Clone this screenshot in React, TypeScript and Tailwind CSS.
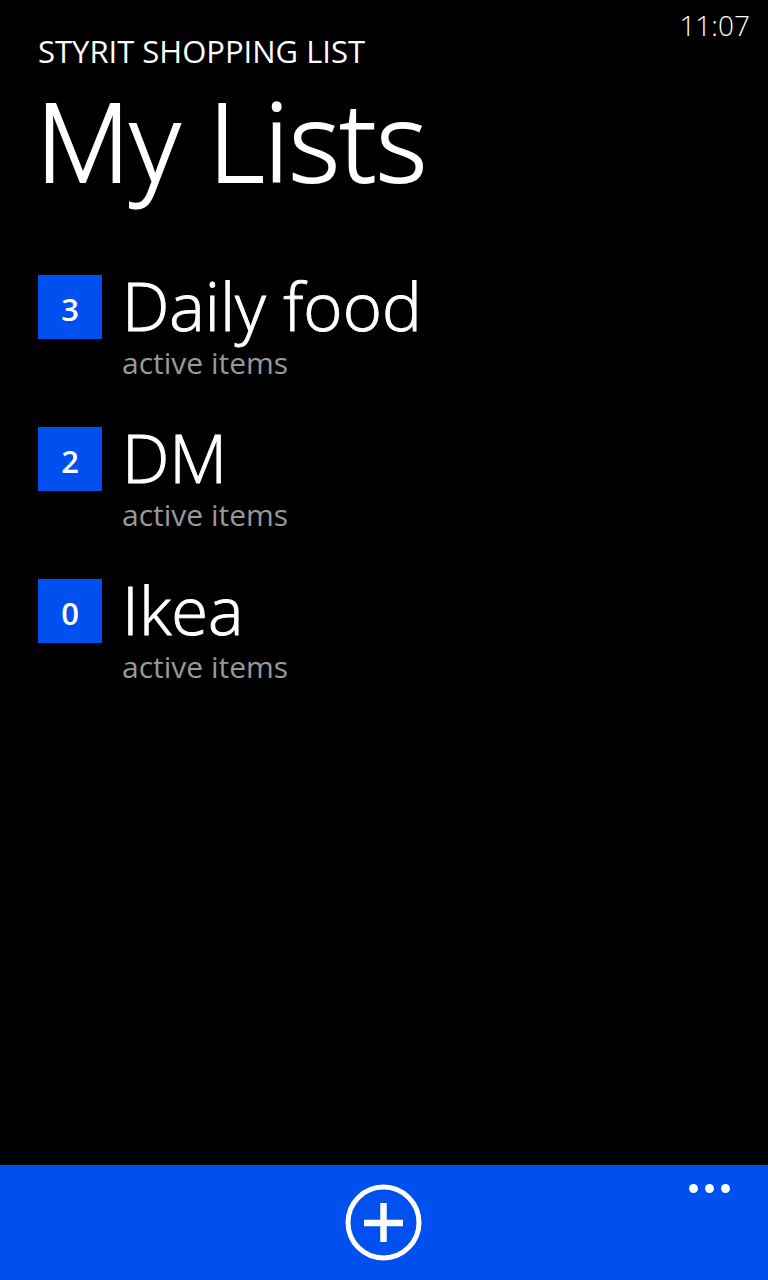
const lists = [
  { name: 'Daily food', count: 3 },
  { name: 'DM', count: 2 },
  { name: 'Ikea', count: 0 },
];

export default function App() {
  return (
    <div className="flex min-h-screen flex-col bg-black font-['Open_Sans','Noto_Sans',sans-serif] text-white">
      <header className="flex items-start justify-between pl-[38px] pr-[18px]">
        <div className="pt-8">
          <p className="text-[31px] leading-[38px]">STYRIT SHOPPING LIST</p>
          <h1 className="-ml-0.5 mt-2 text-[109px] font-light leading-[124px] [-webkit-text-stroke:2px_white]">
            My Lists
          </h1>
        </div>
        <time className="pt-2 text-[28px] font-light leading-[34px]">11:07</time>
      </header>
      <main className="grow px-[38px] pt-[73px]">
        <ul className="flex flex-col gap-12">
          {lists.map((list) => (
            <li key={list.name}>
              <a href="#" className="flex h-[104px] items-start gap-5">
                <span className="flex size-16 shrink-0 items-center justify-center bg-[#0050ef] pt-1 text-[31px] font-semibold">
                  {list.count}
                </span>
                <span className="flex flex-col gap-2">
                  <span className="text-[67px] font-light leading-[60px] [-webkit-text-stroke:1px_white]">
                    {list.name}
                  </span>
                  <span className="text-[30px] leading-[40px] text-[#999999]">active items</span>
                </span>
              </a>
            </li>
          ))}
        </ul>
      </main>
      <footer className="grid h-[115px] grid-cols-3 items-start bg-[#0050ef] px-9">
        <button type="button" aria-label="Add list" className="col-start-2 mt-[19px] justify-self-center">
          <svg width="78" height="78" viewBox="0 0 78 78" fill="none" stroke="white">
            <circle cx="38.5" cy="38.5" r="35.5" strokeWidth="5" />
            <path d="M38.5 19v39M19 39h39" strokeWidth="6.5" />
          </svg>
        </button>
        <button type="button" aria-label="More" className="mt-[18px] justify-self-end">
          <svg width="44" height="12" viewBox="0 0 44 12" fill="white">
            <circle cx="5.5" cy="5.5" r="4.5" />
            <circle cx="21.5" cy="5.5" r="4.5" />
            <circle cx="37.5" cy="5.5" r="4.5" />
          </svg>
        </button>
      </footer>
    </div>
  );
}
